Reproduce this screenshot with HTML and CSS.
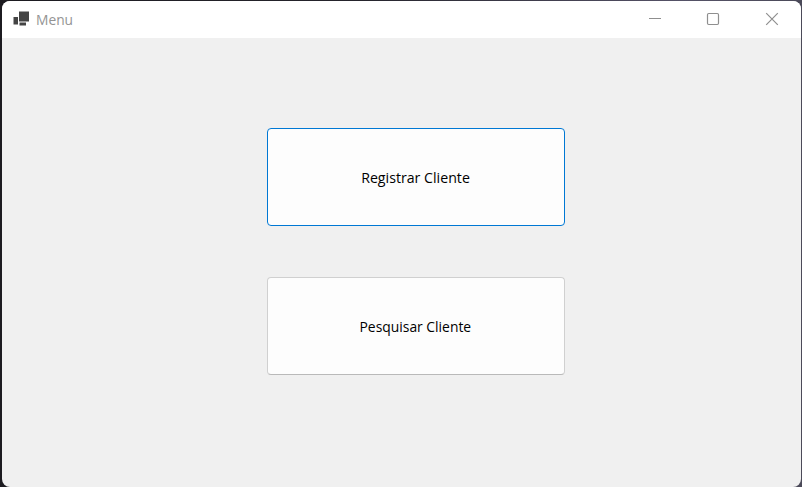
FILE: index.html
```html
<!DOCTYPE html>
<html lang="pt">
<head>
<meta charset="utf-8">
<title>Menu</title>
<link rel="stylesheet" href="styles.css">
</head>
<body>
<div class="window">
  <header class="titlebar">
    <svg class="app-icon" width="16" height="16" viewBox="0 0 16 16" fill="#444"><path d="M.5 6H5v7.5H.5zM6 .5h10v10H6zM6.5 11.5H13v3H6.5z"/></svg>
    <h1 class="title"><span class="label title-label">Menu</span></h1>
    <div class="controls">
      <svg width="14" height="14" viewBox="0 0 14 14"><path d="M1 6.5h12"/></svg>
      <svg width="14" height="14" viewBox="0 0 14 14"><rect x="1.5" y="1.5" width="11" height="11" rx="1.2"/></svg>
      <svg width="14" height="14" viewBox="0 0 14 14"><path d="M1.2 1.2l11.6 11.6M12.8 1.2L1.2 12.8"/></svg>
    </div>
  </header>
  <main class="content">
    <button class="action focused"><span class="label register">Registrar Cliente</span></button>
    <button class="action"><span class="label search">Pesquisar Cliente</span></button>
  </main>
</div>
</body>
</html>
```
FILE: styles.css
```css
* { box-sizing: border-box; }
body {
  margin: 0;
  height: 487px;
  overflow: hidden;
  padding: 1px 1px 0 2px;
  background: linear-gradient(90deg, #1c1b20 0, #25242c 45%, #555267 85%, #4b4a59 100%);
}
.window {
  height: 486px;
  display: flex;
  flex-direction: column;
  border-radius: 8px;
  overflow: hidden;
  background: #f0f0f0;
  font-family: "Open Sans", "Noto Sans", sans-serif;
}
.titlebar {
  height: 37px;
  display: flex;
  align-items: flex-start;
  padding: 10px 22px 0 11px;
  background: #fff;
}
.title {
  margin: -2px auto 0 7px;
  font-size: 15px;
  line-height: 20px;
  font-weight: 400;
  color: #949494;
}
.label { display: inline-block; white-space: nowrap; }
.title-label { transform-origin: left; transform: scaleX(.92); }
.controls {
  display: flex;
  gap: 45px;
  margin-top: 1px;
}
.controls svg {
  fill: none;
  stroke: #8f8f8f;
  stroke-width: 1.2;
}
.controls svg:first-child { margin-right: -1px; padding-right: 0; }
.content {
  flex: 1;
  display: flex;
  flex-direction: column;
  gap: 51px;
  padding: 90px 0 0 265px;
}
.action {
  width: 298px;
  height: 98px;
  padding: 0 1px 1px 0;
  border: 1px solid #d0d0d0;
  border-bottom-color: #b9b9b9;
  border-radius: 4px;
  background: #fdfdfd;
  color: #000;
  font: 15px/20px "Open Sans", "Noto Sans", sans-serif;
}
.focused { border-color: #0078d4; }
.register { transform: scaleX(.945); }
.search { transform: scaleX(.925); }
```
